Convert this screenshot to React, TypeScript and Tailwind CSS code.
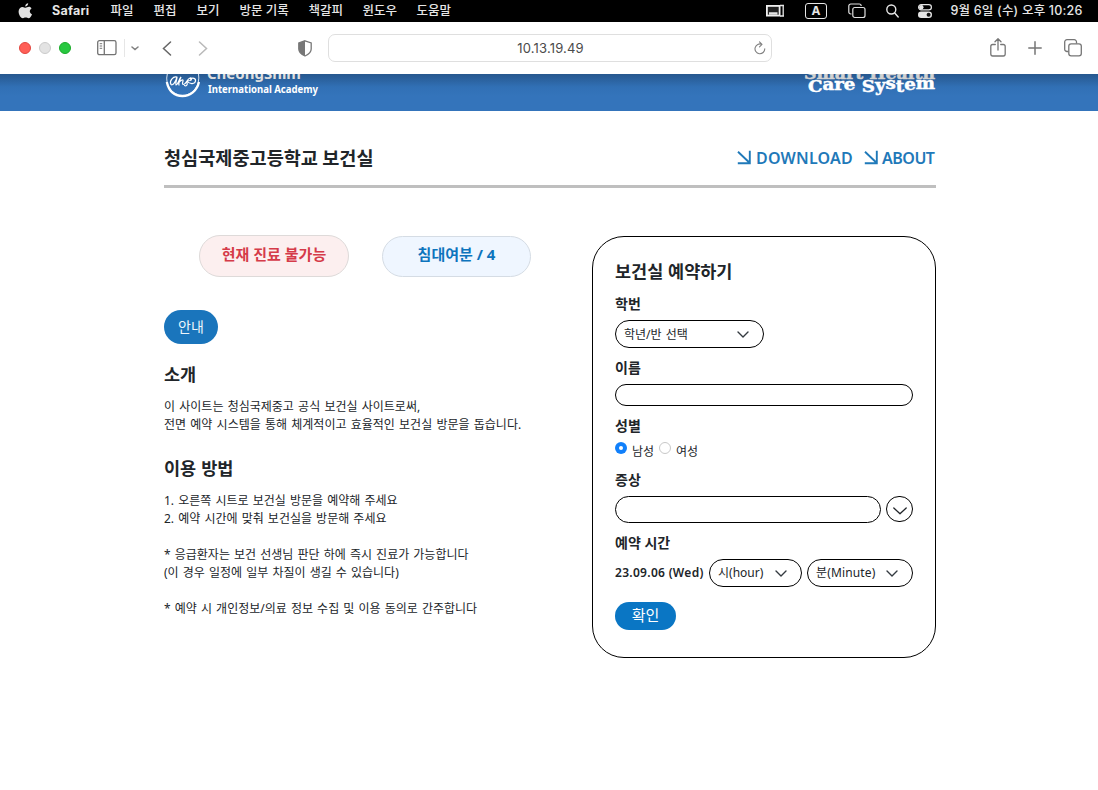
import React from "react";

const SANS = "font-['Noto_Sans','Noto_Sans_CJK_KR',sans-serif]";
const KR = "font-['Noto_Sans_CJK_KR',sans-serif]";
const UI = "font-['Inter','Noto_Sans_CJK_KR',sans-serif]";

function MenuBar() {
  return (
    <header className={`flex h-[22px] items-center bg-black pb-px text-[12.5px] leading-[20px] font-medium whitespace-nowrap text-[#e6e6e6] ${UI}`}>
      <svg className="ml-[18px] h-[16px] w-[15px] shrink-0" viewBox="0 0 15 16" fill="#e2e2e2">
        <path d="M10.200 0.200c.1 1.700-1.300 3.400-3 3.400C7 1.900 8.500.3 10.200.2zM13.500 5.500c-2.500 1.500-2.100 4.700.5 5.700-.7 2-2 4.100-3.400 4.100-1.100 0-1.500-.7-2.900-.7s-1.800.7-2.800.7C2.900 15.300.6 12 .6 8.600c0-3.100 2-4.700 3.900-4.700 1.300 0 2.300.8 3.100.8.800 0 1.900-.9 3.400-.9 1 0 2 .6 2.500 1.700z" />
      </svg>
      <span className="ml-[19px] w-[58.500px] text-[12.5px] font-bold tracking-[0.250px]">Safari</span>
      <span className="w-[43px]">파일</span>
      <span className="w-[43px]">편집</span>
      <span className="w-[43px]">보기</span>
      <span className="w-[69px]">방문 기록</span>
      <span className="w-[54px]">책갈피</span>
      <span className="w-[54px]">윈도우</span>
      <span>도움말</span>
      <svg className="mr-[20px] ml-auto h-[14px] w-[19px]" viewBox="0 0 19 14" fill="none" stroke="#e6e6e6">
        <rect x="0.900" y="1.900" width="12.700" height="9.700" stroke="#f0f0f0" strokeWidth="1.800" fill="#222" />
        <path d="M3 9.500h8.500" strokeWidth="2.500" />
        <path d="M14 1.500h4M14 12h4M17.200 1.500V12" strokeWidth="1.300" />
      </svg>
      <span className="mr-[21px] flex h-[16px] w-[22px] items-center justify-center rounded-[3px] border border-[#e6e6e6] text-[12px] font-bold">A</span>
      <svg className="mr-[20px] h-[16px] w-[18px]" viewBox="0 0 18 16" fill="none" stroke="#e0e0e0" strokeWidth="1.200">
        <path d="M3.500 11H2.800A2 2 0 0 1 .8 9V3a2 2 0 0 1 2-2h8.400a2 2 0 0 1 2 2" />
        <rect x="4.800" y="4.500" width="12.200" height="10" rx="2" />
      </svg>
      <svg className="mr-[19px] h-[14px] w-[13px]" viewBox="0 0 13 14" fill="none" stroke="#e6e6e6" strokeWidth="1.400" strokeLinecap="round">
        <circle cx="5.300" cy="5.500" r="4.500" />
        <path d="M8.700 9l3.500 4" />
      </svg>
      <svg className="mr-[18px] h-[14px] w-[14px]" viewBox="0 0 14 14">
        <rect x="0.600" y="0.600" width="12.800" height="5.200" rx="2.600" fill="none" stroke="#e6e6e6" strokeWidth="1.200" />
        <circle cx="3.300" cy="3.200" r="2.200" fill="#e6e6e6" />
        <rect x="0" y="7.500" width="14" height="6.500" rx="3.200" fill="#e6e6e6" />
        <circle cx="10.600" cy="10.700" r="2" fill="#111" />
      </svg>
      <span className="mr-[15.500px] w-[132.500px] text-right tracking-[0.200px]">9월 6일 (수) 오후 10:26</span>
    </header>
  );
}

function Toolbar() {
  return (
    <div className="flex h-[52px] shrink-0 items-center bg-white">
      <span className="ml-[19px] size-[12px] rounded-full border border-[#e2463f] bg-[#ff5f57]" />
      <span className="ml-[8px] size-[12px] rounded-full border border-[#cbcbcb] bg-[#e3e3e3]" />
      <span className="ml-[8px] size-[12px] rounded-full border border-[#1aab29] bg-[#28c840]" />
      <svg className="ml-[26px] h-[16px] w-[20px]" viewBox="0 0 20 16" fill="none" stroke="#737373" strokeWidth="1.300">
        <rect x="0.700" y="0.700" width="18.300" height="14" rx="1.800" />
        <path d="M7.300 1v13.500" />
        <path d="M2.700 3.700h2.500M2.700 6h2.500M2.700 8.300h2.500" strokeWidth="1" />
      </svg>
      <span className="ml-[7px] h-[18px] w-px bg-[#e6e6e6]" />
      <svg className="ml-[6px] h-[5px] w-[8px]" viewBox="0 0 8 5" fill="none" stroke="#808080" strokeWidth="1.500" strokeLinecap="round">
        <path d="M1 1l3 2.600L7 1" />
      </svg>
      <svg className="ml-[23px] h-[15px] w-[10px]" viewBox="0 0 10 15" fill="none" stroke="#666" strokeWidth="1.500" strokeLinecap="round">
        <path d="M8.500 1L1.500 7.500l7 6.500" />
      </svg>
      <svg className="ml-[26px] h-[15px] w-[10px]" viewBox="0 0 10 15" fill="none" stroke="#b9b9b9" strokeWidth="1.500" strokeLinecap="round">
        <path d="M1.500 1l7 6.500-7 6.500" />
      </svg>
      <svg className="ml-[90px] h-[17px] w-[14px]" viewBox="0 0 14 17">
        <path d="M7 .8l6.200 2.100v6.200c0 3-2.800 5.500-6.200 6.900C3.600 14.600.8 12.100.8 9.100V2.900z" fill="none" stroke="#777" strokeWidth="1.300" />
        <path d="M7 .8v15.200C3.600 14.600.8 12.100.8 9.100V2.900z" fill="#777" />
      </svg>
      <div className={`ml-[16px] flex h-[28px] w-[444px] items-center rounded-[7px] border border-[#dfdfdf] text-[13px] tracking-[0.180px] text-[#4b4b4b] ${UI}`}>
        <span className="ml-[18px] grow pt-px text-center">10.13.19.49</span>
        <svg className="mr-[5px] h-[14px] w-[12px]" viewBox="0 0 12 14" fill="none" stroke="#808080" strokeWidth="1.100" strokeLinecap="round" strokeLinejoin="round">
          <path d="M10.800 7.800A4.900 4.900 0 1 1 7.800 3.300M5.500.8l2.500 2.500-2.500 2.500" />
        </svg>
      </div>
      <svg className="mr-[22px] ml-auto h-[20px] w-[16px]" viewBox="0 0 16 20" fill="none" stroke="#767676" strokeWidth="1.300" strokeLinecap="round" strokeLinejoin="round">
        <path d="M5.300 6.500H2.700a1.900 1.900 0 0 0-1.900 1.900v7.700A1.900 1.900 0 0 0 2.700 18h10.600a1.900 1.900 0 0 0 1.900-1.900V8.400a1.900 1.900 0 0 0-1.900-1.900h-2.600M8 12V1M5 3.800L8 .8l3 3" />
      </svg>
      <svg className="mr-[22px] h-[14px] w-[14px]" viewBox="0 0 14 14" fill="none" stroke="#767676" strokeWidth="1.500" strokeLinecap="round">
        <path d="M7 .8v12.400M.8 7h12.400" />
      </svg>
      <svg className="mr-[16px] h-[18px] w-[18px]" viewBox="0 0 18 18" fill="none" stroke="#767676" strokeWidth="1.300">
        <path d="M4.500 12.500H3A2.300 2.300 0 0 1 .7 10.200V3A2.300 2.300 0 0 1 3 .7h7.200A2.300 2.300 0 0 1 12.500 3v1.500" />
        <rect x="4.800" y="4.800" width="12.500" height="12" rx="2.300" />
      </svg>
    </div>
  );
}

function SiteHeader() {
  return (
    <div className="flex h-[37px] shrink-0 justify-between overflow-hidden bg-[#3474bb] bg-linear-to-b from-[#26578e] via-[#3170b5] via-35% to-[#3474bb] to-60% pr-[162px] pl-[164px]">
      <svg className="h-[37px] w-[160px]" viewBox="0 0 160 37" fill="none">
        <path d="M3.300 0C.5 11 8 21 18.500 21.500 29 21.500 36.500 11 34.500 0" stroke="#d8e4f1" strokeWidth="1" />
        <path d="M2.800 8C5 18 11 22 18.500 22S33 17 35 8" stroke="#fff" strokeWidth="2.300" />
        <path d="M13 3C9 2 5 7 7 10.500 9 12 12 7 13 3c0 3-2 6-1 8 2 0 3-6 5-8-1 3-3 6-2 8M15.500 8c1.500-2 4-3 3.500-1-.5 2-1 3.500.5 3.500C22 10.500 23 5 26 4c2-.5 2 2 0 2.500-2 0-4 0-3 2 1 2.500-1 4-2.500 3M23 7c3 4 8 3 8.500 0 .5-3-3-3.500-5-2" stroke="#fff" strokeWidth="1.200" strokeLinecap="round" />
        <text x="43" y="5" fill="#dfdfdf" fontFamily="Noto Sans" fontWeight="700" fontSize="15" textLength="94" lengthAdjust="spacingAndGlyphs">CheongShim</text>
        <text x="44" y="18.500" fill="#fff" fontFamily="Noto Sans" fontWeight="700" fontSize="10.500" textLength="110" lengthAdjust="spacingAndGlyphs">International Academy</text>
      </svg>
      <svg className="h-[37px] w-[132px]" viewBox="0 0 132 37" fontFamily="DejaVu Serif" fontWeight="700">
        <text x="0" y="5" fill="#d2d2d2" stroke="#d2d2d2" strokeWidth="0.500" fontSize="16" textLength="131" lengthAdjust="spacingAndGlyphs">Smart Health</text>
        <text x="4" y="18" fill="#fff" stroke="#fff" strokeWidth="0.500" fontSize="16.500" textLength="127" lengthAdjust="spacingAndGlyphs" dy="0 -2 0 0 0 2 -1 -2 3 -2 -1">Care System</text>
      </svg>
    </div>
  );
}

function ArrowLink({ label, className }: { label: string; className: string }) {
  return (
    <a className="flex items-center text-[#1f79b9]">
      <svg className="mb-px h-[15px] w-[14px]" viewBox="0 0 14 15" fill="none" stroke="currentColor" strokeWidth="1.900">
        <path d="M1 1.800l11 10.400M12.800.8V13.200H.8" />
      </svg>
      <span className={className}>{label}</span>
    </a>
  );
}

function Chevron({ className }: { className: string }) {
  return (
    <svg className={className} viewBox="0 0 12 7" fill="none" stroke="#343a40" strokeWidth="1.400" strokeLinecap="round" strokeLinejoin="round">
      <path d="M1 1l5 5 5-5" />
    </svg>
  );
}

function Label({ children, className }: { children: React.ReactNode; className: string }) {
  return <div className={`text-[14px] leading-[20px] font-bold ${className}`}>{children}</div>;
}

function Info() {
  return (
    <section className="w-[400px]">
      <div className="ml-[35px] flex">
        <div className="-mt-px flex h-[42px] w-[150px] items-center justify-center rounded-full border border-[#dedad9] bg-[#fcefef] pb-[4px] text-[15px] font-bold text-[#d53b49]">
          현재 진료 불가능
        </div>
        <div className="ml-[33px] flex h-[41px] w-[149px] items-center justify-center rounded-full border border-[#d5dce4] bg-[#eff6ff] pb-[4px] text-[15px] font-bold text-[#0d74bd]">
          침대여분 / 4
        </div>
      </div>
      <button className="mt-[33px] flex h-[34px] w-[54px] items-center justify-center rounded-full bg-[#1a75bc] pb-[2px] text-[14px] text-[#eef5fb]">안내</button>
      <h2 className="mt-[17px] text-[17.500px] leading-[26px] font-bold">소개</h2>
      <p className="mt-[11px] text-[12px] leading-[18px] whitespace-nowrap [word-spacing:1.100px]">
        이 사이트는 청심국제중고 공식 보건실 사이트로써,
        <br />
        전면 예약 시스템을 통해 체계적이고 효율적인 보건실 방문을 돕습니다.
      </p>
      <h2 className="mt-[21px] text-[17.500px] leading-[26px] font-bold [word-spacing:0.500px]">이용 방법</h2>
      <p className="mt-[11px] text-[12px] leading-[18px] whitespace-nowrap [word-spacing:1px]">
        1. 오른쪽 시트로 보건실 방문을 예약해 주세요
        <br />
        2. 예약 시간에 맞춰 보건실을 방문해 주세요
        <br />
        <br />* 응급환자는 보건 선생님 판단 하에 즉시 진료가 가능합니다
        <br />
        (이 경우 일정에 일부 차질이 생길 수 있습니다)
        <br />
        <br />* 예약 시 개인정보/의료 정보 수집 및 이용 동의로 간주합니다
      </p>
    </section>
  );
}

function ReservationForm() {
  return (
    <form className="h-[422px] w-[344px] rounded-[32px] border border-black pr-[22px] pl-[22px]">
      <h2 className="mt-[21px] text-[17.500px] leading-[26px] font-bold [word-spacing:0.200px]">보건실 예약하기</h2>
      <Label className="mt-[10px]">학번</Label>
      <div className="mt-[6px] flex h-[28px] w-[149px] items-center justify-between rounded-full border border-black pr-[14px] pl-[8px] text-[12px] [word-spacing:1px]">
        <span className="pt-px">학년/반 선택</span>
        <Chevron className="h-[7px] w-[12px]" />
      </div>
      <Label className="mt-[10px]">이름</Label>
      <input className="mt-[6px] block h-[22px] w-[298px] rounded-full border border-black px-2 text-[12px]" />
      <Label className="mt-[10px]">성별</Label>
      <div className="mt-[4px] flex h-[20px] text-[12px] leading-[20px]">
        <span className="mt-[2px] flex size-[12px] items-center justify-center rounded-full bg-[#1180fb]">
          <span className="size-[4px] rounded-full bg-white" />
        </span>
        <span className="ml-[5px] w-[27px] pt-[2px]">남성</span>
        <span className="mt-[2px] size-[12px] rounded-full border border-[#c8c8c8]" />
        <span className="ml-[5px] pt-[2px]">여성</span>
      </div>
      <Label className="mt-[10px]">증상</Label>
      <div className="mt-[6px] flex justify-between">
        <input className="h-[27px] w-[266px] rounded-full border border-black px-2 text-[12px]" />
        <button type="button" className="flex h-[26px] w-[27px] items-center justify-center rounded-full border border-black pt-[3px]">
          <svg className="h-[8px] w-[14px]" viewBox="0 0 14 8" fill="none" stroke="#212529" strokeWidth="1.300" strokeLinecap="round" strokeLinejoin="round">
            <path d="M0.800 1L7 6.800L13.200 1" />
          </svg>
        </button>
      </div>
      <Label className="mt-[10px]">예약 시간</Label>
      <div className="mt-[6px] flex h-[28px] items-center text-[12px] whitespace-nowrap">
        <span className="w-[94px] text-[12px] font-semibold tracking-[0.300px]">23.09.06 (Wed)</span>
        <div className="flex h-[28px] w-[93px] items-center justify-between rounded-full border border-black pr-[14px] pl-[8px]">
          시(hour)
          <Chevron className="h-[7px] w-[12px]" />
        </div>
        <div className="ml-[5px] flex h-[28px] w-[106px] items-center justify-between rounded-full border border-black pr-[14px] pl-[8px]">
          <span className="tracking-[0.150px]">분(Minute)</span>
          <Chevron className="h-[7px] w-[12px]" />
        </div>
      </div>
      <button type="button" className="mt-[15px] flex h-[28px] w-[61px] items-center justify-center rounded-full bg-[#0a76c4] pb-px text-[15px] text-white">확인</button>
    </form>
  );
}

export default function App() {
  return (
    <div className={`flex h-[790px] w-[1098px] flex-col overflow-hidden bg-white text-[#212529] ${SANS}`}>
      <MenuBar />
      <Toolbar />
      <SiteHeader />
      <main className="ml-[164px] w-[772px]">
        <div className="flex h-[77px] items-start justify-between border-b-[3px] border-[#bfbfbf] pt-[32px]">
          <h1 className={`text-[18.600px] leading-[28px] font-bold ${KR}`}>청심국제중고등학교 보건실</h1>
          <div className="mt-px mr-[2px] flex h-[28px] gap-[12px] text-[16px] font-semibold">
            <ArrowLink label="DOWNLOAD" className="ml-[5px] w-[96px] tracking-[0.200px]" />
            <ArrowLink label="ABOUT" className="ml-[4px] w-[52px] tracking-[-0.500px]" />
          </div>
        </div>
        <div className="mt-[48px] flex justify-between">
          <Info />
          <ReservationForm />
        </div>
      </main>
    </div>
  );
}
